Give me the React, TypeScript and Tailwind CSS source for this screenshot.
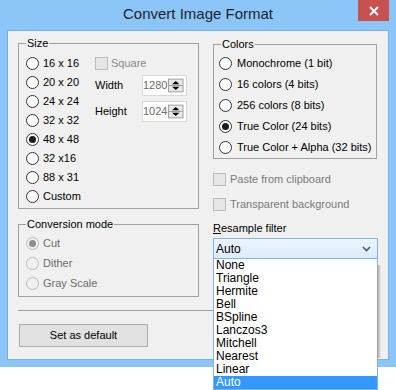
import React from "react";

const sizes = ["16 x 16", "20 x 20", "24 x 24", "32 x 32", "48 x 48", "32 x16", "88 x 31", "Custom"];
const colors = [
  "Monochrome (1 bit)",
  "16 colors (4 bits)",
  "256 colors (8 bits)",
  "True Color (24 bits)",
  "True Color + Alpha (32 bits)",
];
const modes = ["Cut", "Dither", "Gray Scale"];
const filters = ["None", "Triangle", "Hermite", "Bell", "BSpline", "Lanczos3", "Mitchell", "Nearest", "Linear", "Auto"];

function Radio({ checked, disabled }: { checked?: boolean; disabled?: boolean }) {
  return (
    <span
      className={`flex h-[13px] w-[13px] shrink-0 items-center justify-center rounded-full border ${
        disabled ? "border-[#bcbcbc] bg-[#f0f0f0]" : "border-[#333333] bg-white"
      }`}
    >
      {checked && (
        <span className={`h-[7px] w-[7px] rounded-full ${disabled ? "bg-[#8f8f8f]" : "bg-[#1b1b1b]"}`} />
      )}
    </span>
  );
}

function Check() {
  return <span className="h-[13px] w-[13px] shrink-0 border border-[#bcbcbc] bg-[#e6e6e6]" />;
}

function GroupBox({ title, className, children }: { title: string; className: string; children: React.ReactNode }) {
  return (
    <div className={`relative border border-[#a0a0a0] ${className}`}>
      <span className="absolute -top-[7px] left-[7px] bg-[#f0f0f0] px-[1px] leading-[13px]">{title}</span>
      {children}
    </div>
  );
}

function Spin({ value }: { value: string }) {
  return (
    <div className="flex h-[21px] w-[45px] items-center justify-end border border-[#d9d9d9] bg-white pr-[2px]">
      <span className="text-[#6d6d6d]">{value}</span>
      <svg width="17" height="15" viewBox="0 0 17 15" className="ml-[1px]">
        <rect x="0.5" y="0.5" width="16" height="14" fill="#e8e8e8" stroke="#9a9a9a" />
        <line x1="1" y1="7.5" x2="16" y2="7.5" stroke="#9a9a9a" />
        <path d="M4.5 6 L8.5 2.5 L12.5 6 Z" fill="#000" />
        <path d="M4.5 9 L12.5 9 L8.5 12.5 Z" fill="#000" />
      </svg>
    </div>
  );
}

export default function App() {
  return (
    <div className="h-[390px] w-[396px] overflow-hidden bg-white font-['Liberation_Sans',Arial,sans-serif] text-[11px] text-black">
      {/* Window frame */}
      <div className="h-[367px] w-[396px] bg-[#8cc6f8]">
        {/* Title bar */}
        <div className="relative flex h-[30px] items-center justify-center pb-[1px]">
          <span className="text-[15px] text-[#1f1f2f]">Convert Image Format</span>
          <div className="absolute right-[7px] top-0 flex h-[21px] w-[31px] items-center justify-center bg-[#c75050]">
            <svg width="10" height="10" viewBox="0 0 10 10">
              <path d="M1 1 L9 9 M9 1 L1 9" stroke="#fff" strokeWidth="2" />
            </svg>
          </div>
        </div>

        {/* Client area */}
        <div className="relative ml-[7px] h-[330px] w-[382px] border border-[#78b0e4] bg-[#f0f0f0] pl-[10px] pt-[12px]">
          <div className="flex gap-[14px]">
            {/* Left column */}
            <div className="flex w-[181px] flex-col">
              <GroupBox title="Size" className="h-[166px] pl-[7px] pt-[10px]">
                <div className="flex">
                  <div className="flex w-[69px] flex-col">
                    {sizes.map((s) => (
                      <div key={s} className="flex h-[19px] items-center gap-[4px]">
                        <Radio checked={s === "48 x 48"} />
                        <span>{s}</span>
                      </div>
                    ))}
                  </div>
                  <div className="flex flex-col">
                    <div className="flex h-[19px] items-center gap-[3px]">
                      <Check />
                      <span className="text-[#8a8a8a]">Square</span>
                    </div>
                    <div className="mt-[2px] flex h-[21px] items-center">
                      <span className="w-[47px]">Width</span>
                      <Spin value="1280" />
                    </div>
                    <div className="mt-[5px] flex h-[21px] items-center">
                      <span className="w-[47px]">Height</span>
                      <Spin value="1024" />
                    </div>
                  </div>
                </div>
              </GroupBox>

              <GroupBox title="Conversion mode" className="mt-[15px] h-[73px] pl-[7px] pt-[8px]">
                {modes.map((m) => (
                  <div key={m} className="flex h-[20px] items-center gap-[4px]">
                    <Radio checked={m === "Cut"} disabled />
                    <span className="text-[#6d6d6d]">{m}</span>
                  </div>
                ))}
              </GroupBox>
            </div>

            {/* Right column */}
            <div className="flex w-[165px] flex-col">
              <GroupBox title="Colors" className="mt-[1px] h-[115px] w-[164px] pl-[5px] pt-[8px]">
                {colors.map((c) => (
                  <div key={c} className="flex h-[21px] items-center gap-[5px]">
                    <Radio checked={c === "True Color (24 bits)"} />
                    <span>{c}</span>
                  </div>
                ))}
              </GroupBox>

              <div className="mt-[14px] flex h-[13px] items-center gap-[4px]">
                <Check />
                <span className="text-[#7a7a7a]">Paste from clipboard</span>
              </div>
              <div className="mt-[12px] flex h-[13px] items-center gap-[4px]">
                <Check />
                <span className="text-[#7a7a7a]">Transparent background</span>
              </div>

              <div className="mt-[11px] h-[13px] leading-[13px]">
                <u>R</u>esample filter
              </div>

              {/* Combobox with open list */}
              <div className="relative mt-[3px] flex h-[21px] items-center justify-between border border-[#7eb4ea] bg-gradient-to-b from-[#ecf4fc] to-[#dcecfc] pl-[2px] pr-[6px]">
                <span className="text-[12px]">Auto</span>
                <svg width="9" height="6" viewBox="0 0 9 6">
                  <path d="M1 1 L4.5 4.5 L8 1" stroke="#555" strokeWidth="1.6" fill="none" />
                </svg>

                <div className="absolute -left-[1px] top-[19px] z-10 w-[165px] border border-[#7eb4ea] bg-white">
                  {filters.map((f) => (
                    <div
                      key={f}
                      className={`h-[13px] pl-[2px] text-[12px] leading-[13px] ${
                        f === "Auto" ? "bg-[#3399ff] text-white" : "text-black"
                      }`}
                    >
                      {f}
                    </div>
                  ))}
                  <div className="absolute left-full top-[6px] h-[93px] w-[4px] bg-gradient-to-r from-[#9a9a9a] to-[#f0f0f0]" />
                </div>
              </div>
            </div>
          </div>

          {/* Separator */}
          <div className="mt-[13px] h-px w-[359px] bg-[#a0a0a0]" />

          <button className="ml-[1px] mt-[13px] flex h-[23px] w-[129px] items-center justify-center border border-[#adadad] bg-[#e1e1e1]">
            Set as default
          </button>
        </div>
      </div>
    </div>
  );
}
